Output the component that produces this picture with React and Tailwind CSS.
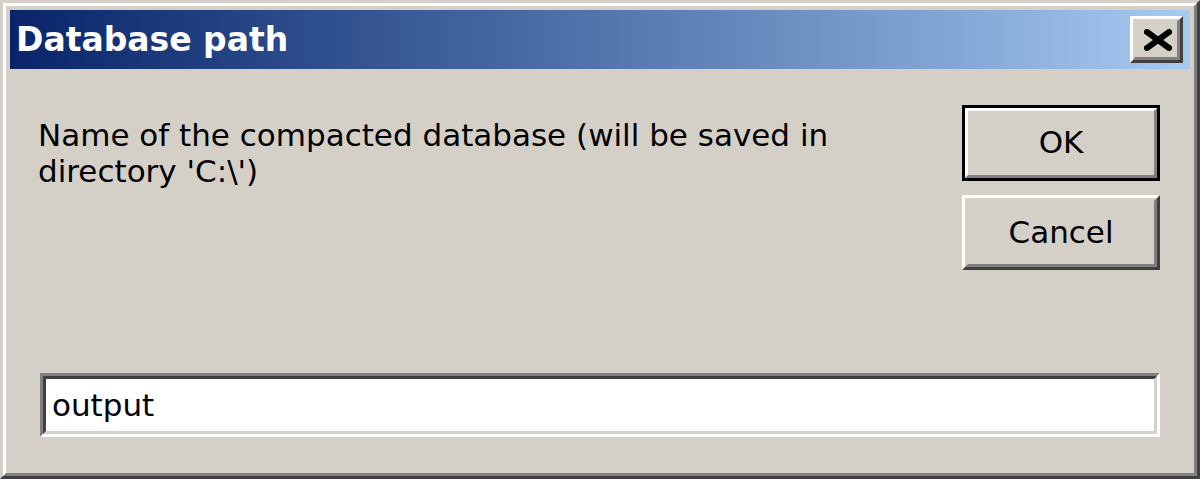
import React from 'react';

const font = "font-['DejaVu_Sans',sans-serif]";

const CloseButton = () => (
  <div className="w-[53px] h-[47px] border-t-[3px] border-l-[3px] border-t-white border-l-white border-r-[3px] border-b-[3px] border-r-[#404040] border-b-[#404040]">
    <div className="w-full h-full bg-[#d4d0c8] border-t-[2px] border-l-[2px] border-t-[#d4d0c8] border-l-[#d4d0c8] border-r-[3px] border-b-[3px] border-r-[#808080] border-b-[#808080] flex items-center justify-center">
      <svg width="28" height="22" viewBox="0 0 28 22" className="ml-[4px] mt-[1px]">
        <path d="M3 3 L25 19 M25 3 L3 19" stroke="#000" strokeWidth="6" strokeLinecap="square" fill="none" />
      </svg>
    </div>
  </div>
);

const App = () => {
  return (
    <div className={`w-[1200px] h-[479px] bg-[#d4d0c8] border-[3px] border-t-[#d4d0c8] border-l-[#d4d0c8] border-r-[#404040] border-b-[#404040] ${font}`}>
      <div className="w-full h-full border-[3px] border-t-white border-l-white border-r-[#808080] border-b-[#808080] p-[4px] flex flex-col">
        {/* Caption */}
        <div className="h-[59px] shrink-0 bg-gradient-to-r from-[#0a246a] to-[#a6caf0] flex items-center justify-between pl-[6px] pr-[7px]">
          <span className="text-white font-bold text-[33px] leading-[38px] tracking-[0px]">Database path</span>
          <CloseButton />
        </div>

        {/* Body */}
        <div className="flex-1 flex flex-col pt-[36px] pb-[32px] pl-[30px] pr-[30px] text-black">
          <div className="flex justify-between">
            <p className="ml-[-2px] mt-[12px] text-[31px] leading-[36px]">
              Name of the compacted database (will be saved in
              <br />
              directory 'C:\')
            </p>
            <div className="flex flex-col gap-[14px] w-[198px]">
              <div className="h-[76px] border-[3px] border-black">
                <div className="w-full h-full border-[3px] border-t-white border-l-white border-r-[#808080] border-b-[#808080] flex items-center justify-center text-[31px] leading-[36px] pb-[2px]">
                  OK
                </div>
              </div>
              <div className="h-[75px] border-[3px] border-t-white border-l-white border-r-[#404040] border-b-[#404040]">
                <div className="w-full h-full border-[3px] border-t-[#d4d0c8] border-l-[#d4d0c8] border-r-[#808080] border-b-[#808080] flex items-center justify-center text-[31px] leading-[36px] pb-[2px]">
                  Cancel
                </div>
              </div>
            </div>
          </div>

          <div className="mt-auto h-[64px] border-[3px] border-t-[#808080] border-l-[#808080] border-r-white border-b-white">
            <div className="w-full h-full bg-white border-[3px] border-t-[#404040] border-l-[#404040] border-r-[#d4d0c8] border-b-[#d4d0c8] flex items-center pl-[6px] text-[31px] leading-[36px]">
              output
            </div>
          </div>
        </div>
      </div>
    </div>
  );
};

export default App;
